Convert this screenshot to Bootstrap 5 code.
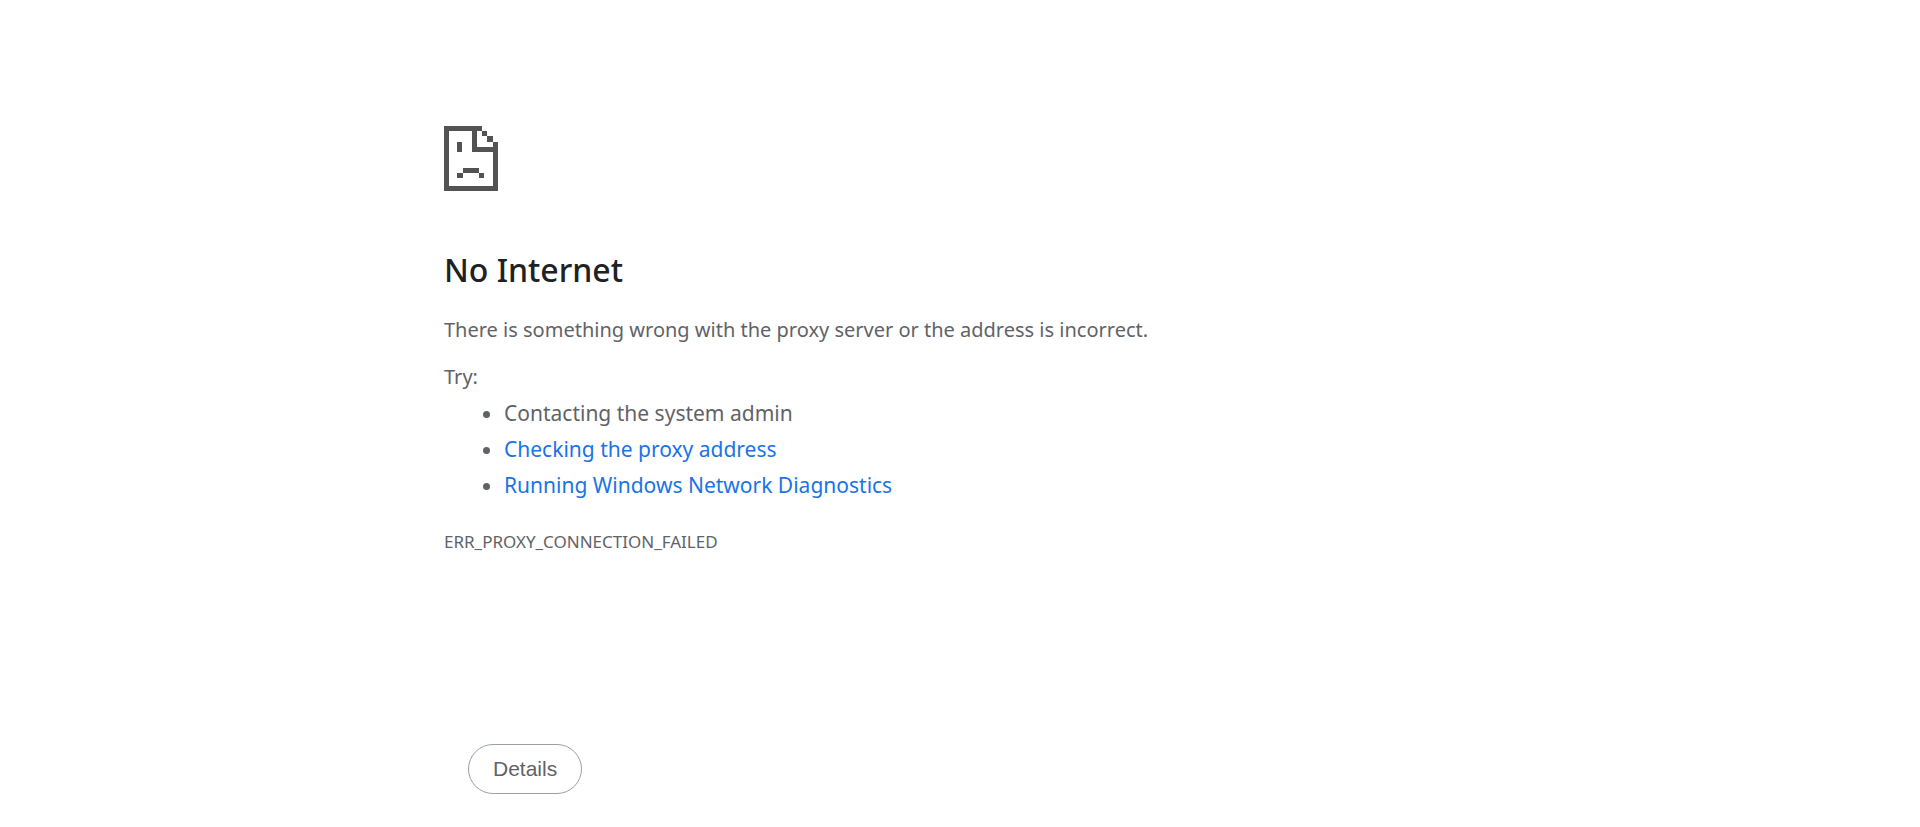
<!DOCTYPE html>
<html lang="en">
<head>
<meta charset="utf-8">
<meta name="viewport" content="width=device-width, initial-scale=1">
<title>No Internet</title>
<link href="https://cdn.jsdelivr.net/npm/bootstrap@5.3.0/dist/css/bootstrap.min.css" rel="stylesheet">
<style>
  body { font-family: "Segoe UI", "Noto Sans", "Open Sans", sans-serif; color: #5f6368; background: #fff; }
  .error-page { max-width: 1032px; padding-top: 126px; }
  .sad-page { width: 54px; height: 65px; fill: #535353; }
  .error-title { font-size: 32px; line-height: 48px; font-weight: 500; color: #202124; margin: 55px 0 18px; }
  .error-text { font-size: 20px; line-height: 36px; }
  .error-text p { margin-bottom: 11px; }
  .error-text p.try-label { margin-bottom: 0; }
  .tips { font-size: 21px; padding-left: 60px; margin-bottom: 21px; }
  .tips a { color: #1a73e8; }
  .error-code { font-size: 17px; line-height: 36px; }
  .btn-details { font-family: Arial, "Liberation Sans", sans-serif; font-size: 21px; line-height: 24px; color: #5f6368; border-color: #9aa0a6; padding: 12px 24px; margin: 184px 24px 0; }
</style>
</head>
<body>
<main class="error-page container-fluid px-0">
  <svg class="sad-page d-block" viewBox="0 0 54 65" shape-rendering="crispEdges" aria-hidden="true">
    <path d="M0 0H38V5H33V21H49V16H54V65H0ZM5 5V60H49V26H28V5Z" fill-rule="evenodd"/>
    <path d="M38 5H43V10H38ZM43 10H49V16H43ZM13 16H18V26H13ZM19 42H35V47H19ZM13 47H19V52H13ZM35 47H40V52H35Z"/>
  </svg>
  <h1 class="error-title">No Internet</h1>
  <div class="error-text">
    <p>There is something wrong with the proxy server or the address is incorrect.</p>
    <p class="try-label">Try:</p>
    <ul class="tips">
      <li>Contacting the system admin</li>
      <li><a class="text-decoration-none" href="#proxy">Checking the proxy address</a></li>
      <li><a class="text-decoration-none" href="#diagnostics">Running Windows Network Diagnostics</a></li>
    </ul>
  </div>
  <div class="error-code">ERR_PROXY_CONNECTION_FAILED</div>
  <button type="button" class="btn btn-details rounded-pill">Details</button>
</main>
<script src="https://cdn.jsdelivr.net/npm/bootstrap@5.3.0/dist/js/bootstrap.bundle.min.js"></script>
</body>
</html>
